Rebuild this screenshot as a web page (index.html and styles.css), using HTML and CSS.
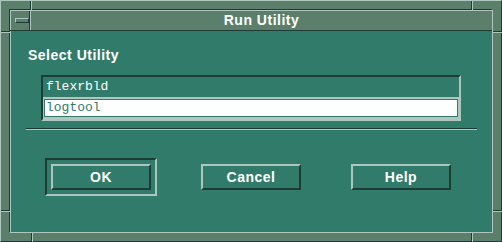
FILE: index.html
```html
<!DOCTYPE html>
<html lang="en">
<head>
  <meta charset="UTF-8">
  <title>Run Utility</title>
  <link rel="stylesheet" href="styles.css">
</head>
<body>

  <div class="window">
    <!-- resize handle grooves in the frame -->
    <span class="notch notch-v" style="left:29px;top:0"></span>
    <span class="notch notch-v" style="left:470px;top:0"></span>
    <span class="notch notch-v" style="left:30px;top:232px"></span>
    <span class="notch notch-v" style="left:470px;top:232px"></span>
    <span class="notch notch-h" style="left:0;top:30px"></span>
    <span class="notch notch-h" style="left:0;top:209px"></span>
    <span class="notch notch-h" style="left:492px;top:30px"></span>
    <span class="notch notch-h" style="left:492px;top:209px"></span>

    <div class="inner">
      <div class="titlebar">
        <div class="menu-btn"><span class="min-bar"></span></div>
        <div class="title">Run Utility</div>
      </div>

      <div class="content">
        <div class="label">Select Utility</div>

        <div class="list">
          <div class="item">flexrbld</div>
          <div class="item-sel">
            <div class="item-sel-inner">logtool</div>
          </div>
        </div>

        <hr class="separator">

        <div class="buttons">
          <div class="default-ring">
            <button class="btn">OK</button>
          </div>
          <button class="btn">Cancel</button>
          <button class="btn">Help</button>
        </div>
      </div>
    </div>
  </div>

</body>
</html>
```

FILE: styles.css
```css
body {
  margin: 0;
  padding: 0;
  background-color: #5b7f6b;
  font-family: "Liberation Sans", Arial, sans-serif;
}

.window {
  position: relative;
  width: 502px;
  height: 242px;
  box-sizing: border-box;
  padding: 8px;
  background-color: #5b7f6b;
  border: 1px solid;
  border-color: #aec7be #1d3d34 #1d3d34 #aec7be;
}

.notch {
  position: absolute;
}

.notch-v {
  width: 1px;
  height: 9px;
  background-color: #1d3d34;
  border-right: 1px solid #aec7be;
}

.notch-h {
  width: 9px;
  height: 1px;
  background-color: #1d3d34;
  border-bottom: 1px solid #aec7be;
}

.inner {
  height: 100%;
  box-sizing: border-box;
  border: 1px solid;
  border-color: #1d3d34 #aec7be #aec7be #1d3d34;
  display: flex;
  flex-direction: column;
}

.titlebar {
  display: flex;
  height: 21px;
  box-sizing: border-box;
  border-top: 1px solid #aec7be;
  border-bottom: 1px solid #1d3d34;
}

.menu-btn {
  width: 20px;
  box-sizing: border-box;
  border-left: 1px solid #aec7be;
  border-right: 1px solid #1d3d34;
  padding: 7px 0 0 4px;
}

.min-bar {
  display: block;
  width: 12px;
  height: 3px;
  background-color: #5b7f6b;
  border: 1px solid;
  border-color: #aec7be #1d3d34 #1d3d34 #aec7be;
}

.title {
  flex: 1;
  border-left: 1px solid #aec7be;
  color: #fff;
  font-weight: bold;
  font-size: 14px;
  letter-spacing: 0.5px;
  text-align: center;
  line-height: 19px;
}

.content {
  flex: 1;
  background-color: #317b6a;
  border-left: 1px solid #aec7be;
}

.label {
  margin: 16px 0 0 17px;
  color: #fff;
  font-weight: bold;
  font-size: 14px;
  letter-spacing: 0.5px;
  line-height: 16px;
}

.list {
  margin: 12px 0 0 30px;
  width: 420px;
  box-sizing: border-box;
  border: 2px solid;
  border-color: #1d3d34 #aec7be #aec7be #1d3d34;
  font-family: "Liberation Mono", "Courier New", monospace;
  font-size: 13px;
}

.item {
  height: 20px;
  line-height: 20px;
  padding-left: 3px;
  color: #fff;
}

.item-sel {
  background-color: #aec7be;
  padding: 2px 1px 2px 1px;
}

.item-sel-inner {
  background-color: #fff;
  border: 1px solid #317b6a;
  height: 16px;
  line-height: 16px;
  padding-left: 1px;
  color: #317b6a;
}

.separator {
  border: none;
  border-top: 1px solid #1d3d34;
  border-bottom: 1px solid #aec7be;
  margin: 7px 0 0 15px;
  width: 451px;
}

.buttons {
  display: flex;
  gap: 50px;
  margin: 34px 0 0 40px;
}

.default-ring {
  margin: -6px;
  padding: 4px;
  border: 2px solid;
  border-color: #1d3d34 #aec7be #aec7be #1d3d34;
  display: flex;
}

.btn {
  width: 100px;
  height: 26px;
  box-sizing: border-box;
  margin: 0;
  padding: 0;
  background-color: #317b6a;
  border: 2px solid;
  border-color: #aec7be #1d3d34 #1d3d34 #aec7be;
  color: #fff;
  font-family: "Liberation Sans", Arial, sans-serif;
  font-weight: bold;
  font-size: 14px;
  letter-spacing: 0.5px;
}
```
